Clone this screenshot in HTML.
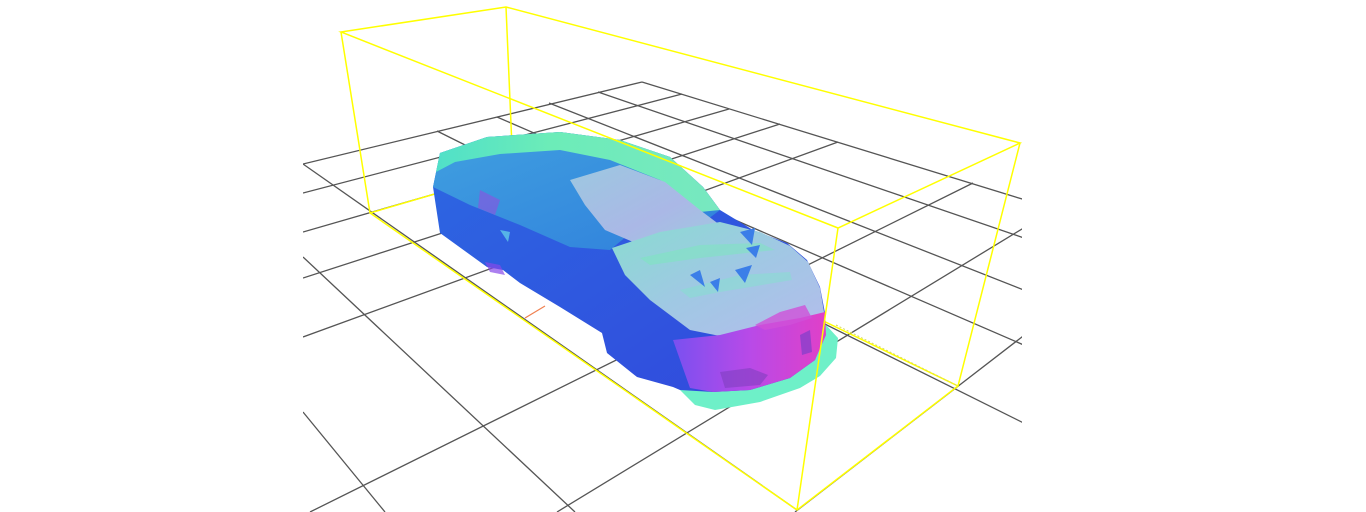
<!DOCTYPE html>
<html><head><meta charset="utf-8"><style>
html,body{margin:0;padding:0;background:#fff;width:1366px;height:512px;overflow:hidden}
svg{display:block}
</style></head><body>
<svg width="1366" height="512" viewBox="0 0 1366 512" xmlns="http://www.w3.org/2000/svg">
<defs>
<clipPath id="gc"><rect x="303" y="0" width="719" height="512"/></clipPath>
<linearGradient id="roof" x1="0" y1="0" x2="1" y2="0">
<stop offset="0" stop-color="#50e0c8"/><stop offset="0.4" stop-color="#6cecb8"/><stop offset="1" stop-color="#78e8c0"/></linearGradient>
<linearGradient id="glass" x1="0" y1="0" x2="1" y2="1">
<stop offset="0" stop-color="#9cc8e0"/><stop offset="0.6" stop-color="#aab8e6"/><stop offset="1" stop-color="#a0c8e0"/></linearGradient>
<linearGradient id="hood" x1="0" y1="0" x2="1" y2="1">
<stop offset="0" stop-color="#88dcd0"/><stop offset="0.5" stop-color="#a0c8e4"/><stop offset="1" stop-color="#b4bcec"/></linearGradient>
<linearGradient id="front" x1="0" y1="0" x2="1" y2="0">
<stop offset="0" stop-color="#7a50f0"/><stop offset="0.5" stop-color="#b84ae8"/><stop offset="1" stop-color="#e040c8"/></linearGradient>
<linearGradient id="side" x1="0" y1="0" x2="1" y2="1">
<stop offset="0" stop-color="#2c68e2"/><stop offset="1" stop-color="#3248dc"/></linearGradient>
<linearGradient id="rear" x1="0" y1="0" x2="1" y2="1">
<stop offset="0" stop-color="#40a0e0"/><stop offset="1" stop-color="#3080dc"/></linearGradient>
</defs>
<g clip-path="url(#gc)" stroke="#555" stroke-width="1.3" fill="none">
<line x1="642" y1="82" x2="1100" y2="223"/>
<line x1="598" y1="92" x2="1100" y2="264"/>
<line x1="549" y1="103" x2="1100" y2="320"/>
<line x1="497" y1="117" x2="1100" y2="378"/>
<line x1="437" y1="131" x2="1100" y2="461"/>
<line x1="303" y1="164" x2="797" y2="510"/>
<line x1="303" y1="257" x2="575" y2="512"/>
<line x1="303" y1="412" x2="385" y2="512"/>
<line x1="303" y1="164" x2="642" y2="82"/>
<line x1="303" y1="193" x2="682" y2="94"/>
<line x1="303" y1="232" x2="729" y2="109"/>
<line x1="303" y1="278" x2="780" y2="124"/>
<line x1="303" y1="337" x2="838" y2="142"/>
<line x1="310" y1="512" x2="973" y2="183"/>
<line x1="557" y1="512" x2="1040" y2="218"/>
<line x1="795" y1="512" x2="1040" y2="323"/>
</g>
<g stroke="#ffff00" stroke-width="1.5" fill="none">
<polyline points="506,7 513,171"/>
<polyline points="370,213 513,171 958,386"/>
</g>
<polygon points="680,390 720,370 790,345 826,325 838,338 836,358 820,376 800,388 760,402 715,410 695,405" fill="#6ef0c8"/>
<polygon points="440,153 487,137 560,132 620,140 670,157 703,187 720,210 753,230 787,243 807,260 820,287 825,313 825,333 815,360 790,378 750,390 713,392 680,390 673,387 637,377 607,353 602,333 560,307 520,283 503,270 487,267 440,233 433,187" fill="url(#side)"/>
<polygon points="433,187 440,153 487,137 560,132 620,140 670,157 703,187 720,210 700,225 640,225 610,250 570,247 520,225 470,205" fill="url(#rear)"/>
<polygon points="440,153 487,137 560,132 620,140 670,157 703,187 720,210 700,212 660,180 610,160 560,150 500,154 455,162 436,172" fill="url(#roof)"/>
<polygon points="570,180 620,165 665,182 700,210 720,225 700,240 640,245 605,230 585,205" fill="url(#glass)"/>
<polygon points="612,248 660,232 720,222 760,232 790,246 808,262 820,288 825,318 790,330 730,338 690,330 650,300 625,275" fill="url(#hood)"/>
<polygon points="640,258 700,245 760,243 775,250 700,258 650,265" fill="#78ecb8" opacity="0.45"/>
<polygon points="680,290 740,275 790,272 792,280 720,292 690,298" fill="#7ee8c8" opacity="0.4"/>
<polygon points="673,340 720,335 760,325 800,318 825,312 826,335 815,360 790,378 750,390 713,392 690,388" fill="url(#front)"/>
<polygon points="755,325 780,312 805,305 812,318 790,325 765,330" fill="#d050d8" opacity="0.8"/>
<polygon points="720,372 750,368 768,375 760,385 725,388" fill="#8040c0" opacity="0.6"/>
<polygon points="800,335 810,330 812,352 802,355" fill="#7040c8" opacity="0.6"/>
<polygon points="480,190 500,200 495,215 478,208" fill="#9050e0" opacity="0.6"/>
<polygon points="485,262 500,265 505,275 490,272" fill="#8848e8" opacity="0.7"/>
<polygon points="500,230 510,232 508,242" fill="#60c8e8" opacity="0.8"/>
<g fill="#3b7ee8">
<polygon points="740,232 755,228 752,245"/>
<polygon points="746,248 760,245 756,258"/>
<polygon points="690,275 700,270 705,287"/>
<polygon points="735,270 752,265 745,283"/>
<polygon points="710,282 720,278 718,292"/>
</g>
<g stroke="#ffff00" stroke-width="1.5" fill="none">
<polygon points="341,32 506,7 1020,143 838,228"/>
<polyline points="341,32 370,213 797,510 958,386 1020,143"/>
<polyline points="838,228 797,510"/>
</g>
<line x1="836" y1="325" x2="958" y2="386" stroke="#d8d860" stroke-width="1" stroke-dasharray="2,2"/>
<line x1="525" y1="318" x2="545" y2="306" stroke="#f08050" stroke-width="1.2"/>
</svg>
</body></html>
